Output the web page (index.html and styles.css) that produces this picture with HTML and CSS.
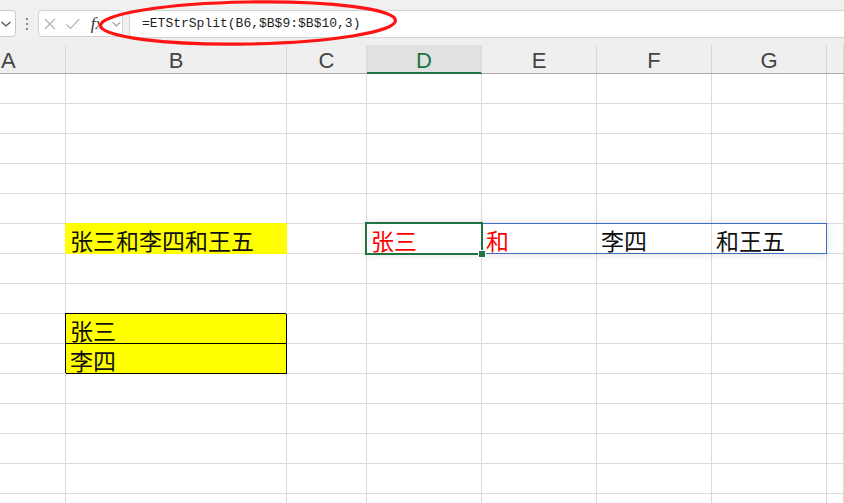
FILE: index.html
```html
<!DOCTYPE html>
<html>
    <head>
        <title>ETStrSplit</title>
        <meta charset="UTF-8">
        <meta name="viewport" content="width=device-width, initial-scale=1.0">
        <link rel="stylesheet" href="styles.css">
    </head>
    <body>
        <div class="topbar">
            <div class="namebox">
                <svg width="12" height="8" viewBox="0 0 12 8"><path d="M1.5 2 L6 6 L10.5 2" fill="none" stroke="#555" stroke-width="1.3"/></svg>
            </div>
            <div class="dots"><span></span><span></span><span></span></div>
            <div class="fxbox">
                <svg class="ico" width="14" height="14" viewBox="0 0 14 14"><path d="M2 2 L12 12 M12 2 L2 12" stroke="#b3b3b3" stroke-width="1.2"/></svg>
                <svg class="ico" width="16" height="14" viewBox="0 0 16 14"><path d="M1.5 7.5 L5.5 11.5 L14.5 2" fill="none" stroke="#b3b3b3" stroke-width="1.2"/></svg>
                <span class="fx">fx</span>
                <svg class="ico" width="11" height="8" viewBox="0 0 11 8"><path d="M1.5 2 L5.5 6 L9.5 2" fill="none" stroke="#999" stroke-width="1.1"/></svg>
            </div>
            <div class="formula">=ETStrSplit(B6,$B$9:$B$10,3)</div>
            <!-- circulo vermelho por cima da barra -->
            <svg class="marca" width="844" height="52" viewBox="0 0 844 52">
                <ellipse cx="248" cy="23" rx="147.5" ry="21" transform="rotate(-1 248 23)" fill="none" stroke="#ff1414" stroke-width="3.2"/>
            </svg>
        </div>

        <div class="colhead">
            <div class="h hA">A</div>
            <div class="h">B</div>
            <div class="h">C</div>
            <div class="h hsel">D</div>
            <div class="h">E</div>
            <div class="h">F</div>
            <div class="h">G</div>
            <div class="h"></div>
        </div>

        <div class="folha">
            <div class="row"><div class="c"></div><div class="c"></div><div class="c"></div><div class="c"></div><div class="c"></div><div class="c"></div><div class="c"></div><div class="c"></div></div>
            <div class="row"><div class="c"></div><div class="c"></div><div class="c"></div><div class="c"></div><div class="c"></div><div class="c"></div><div class="c"></div><div class="c"></div></div>
            <div class="row"><div class="c"></div><div class="c"></div><div class="c"></div><div class="c"></div><div class="c"></div><div class="c"></div><div class="c"></div><div class="c"></div></div>
            <div class="row"><div class="c"></div><div class="c"></div><div class="c"></div><div class="c"></div><div class="c"></div><div class="c"></div><div class="c"></div><div class="c"></div></div>
            <div class="row"><div class="c"></div><div class="c"></div><div class="c"></div><div class="c"></div><div class="c"></div><div class="c"></div><div class="c"></div><div class="c"></div></div>
            <div class="row">
                <div class="c"></div>
                <div class="c amarelo">张三和李四和王五</div>
                <div class="c"></div>
                <div class="c vermelho ativa">张三
                    <div class="intervalo"></div>
                    <div class="selecao"></div>
                    <div class="alca"></div>
                </div>
                <div class="c vermelho">和</div>
                <div class="c">李四</div>
                <div class="c">和王五</div>
                <div class="c"></div>
            </div>
            <div class="row"><div class="c"></div><div class="c"></div><div class="c"></div><div class="c"></div><div class="c"></div><div class="c"></div><div class="c"></div><div class="c"></div></div>
            <div class="row"><div class="c"></div><div class="c"></div><div class="c"></div><div class="c"></div><div class="c"></div><div class="c"></div><div class="c"></div><div class="c"></div></div>
            <div class="row">
                <div class="c"></div>
                <div class="c lista">张三</div>
                <div class="c"></div><div class="c"></div><div class="c"></div><div class="c"></div><div class="c"></div><div class="c"></div>
            </div>
            <div class="row">
                <div class="c"></div>
                <div class="c lista">李四</div>
                <div class="c"></div><div class="c"></div><div class="c"></div><div class="c"></div><div class="c"></div><div class="c"></div>
            </div>
            <div class="row"><div class="c"></div><div class="c"></div><div class="c"></div><div class="c"></div><div class="c"></div><div class="c"></div><div class="c"></div><div class="c"></div></div>
            <div class="row"><div class="c"></div><div class="c"></div><div class="c"></div><div class="c"></div><div class="c"></div><div class="c"></div><div class="c"></div><div class="c"></div></div>
            <div class="row"><div class="c"></div><div class="c"></div><div class="c"></div><div class="c"></div><div class="c"></div><div class="c"></div><div class="c"></div><div class="c"></div></div>
            <div class="row"><div class="c"></div><div class="c"></div><div class="c"></div><div class="c"></div><div class="c"></div><div class="c"></div><div class="c"></div><div class="c"></div></div>
            <div class="row"><div class="c"></div><div class="c"></div><div class="c"></div><div class="c"></div><div class="c"></div><div class="c"></div><div class="c"></div><div class="c"></div></div>
        </div>
    </body>
</html>
```

FILE: styles.css
```css
html, body {
    margin: 0;
    padding: 0;
    height: 100%;
    overflow: hidden;
    background: #fff;
    font-family: "Liberation Sans", Arial, sans-serif;
}

/* barra da formula
   ===================== */
.topbar {
    position: relative;
    height: 38px;
    padding-top: 10px;
    box-sizing: border-box;
    background: #f0f0f0;
    display: flex;
}
.namebox {
    width: 25px;
    height: 27px;
    margin-left: -9px;
    box-sizing: border-box;
    background: #fff;
    border: 1px solid #c9c9c9;
    border-radius: 4px;
    display: flex;
    align-items: center;
    justify-content: flex-end;
    padding-right: 3px;
}
.dots {
    width: 22px;
    display: flex;
    flex-direction: column;
    align-items: center;
    justify-content: center;
    gap: 3px;
    padding-bottom: 1px;
}
.dots span {
    width: 2px;
    height: 2px;
    background: #8a8a8a;
}
.fxbox {
    width: 85px;
    height: 27px;
    box-sizing: border-box;
    background: #fff;
    border: 1px solid #d2d2d2;
    border-radius: 4px;
    display: flex;
    align-items: center;
    padding-left: 4px;
}
.fxbox .ico {
    margin-right: 8px;
}
.fxbox .ico:last-child {
    margin-right: 0;
}
.fx {
    font-family: "Liberation Serif", serif;
    font-style: italic;
    font-size: 17px;
    line-height: 17px;
    color: #333;
    margin: 0 8px 0 2px;
}
.formula {
    flex: 1;
    margin-left: 6px;
    height: 28px;
    box-sizing: border-box;
    background: #fff;
    border-top: 1px solid #d4d4d4;
    border-bottom: 1px solid #d4d4d4;
    border-left: 1px solid #d4d4d4;
    padding-left: 12px;
    font-family: "Liberation Mono", "Courier New", monospace;
    font-size: 13px;
    line-height: 26px;
    color: #1e1e1e;
}
.marca {
    position: absolute;
    left: 0;
    top: 0;
    pointer-events: none;
}

/* cabecalho das colunas
   ===================== */
.colhead, .row {
    display: grid;
    grid-template-columns: 66px 221px 80px 115px 115px 115px 115px 1fr;
}
.colhead {
    background: #efefef;
    padding-top: 7px;
    border-bottom: 1px solid #ababab;
}
.h {
    height: 28px;
    box-sizing: border-box;
    border-right: 1px solid #d8d8d8;
    display: flex;
    align-items: flex-end;
    justify-content: center;
    padding-bottom: 1px;
    font-size: 22px;
    line-height: 22px;
    color: #444;
}
.hA {
    justify-content: flex-start;
    padding-left: 1px;
}
.hsel {
    background: #e1e1e1;
    color: #217346;
    box-shadow: inset 0 -1px 0 #217346, 0 1px 0 #217346;
}

/* celulas
   ===================== */
.c {
    height: 30px;
    box-sizing: border-box;
    border-right: 1px solid #dadada;
    border-bottom: 1px solid #dadada;
    display: flex;
    align-items: flex-end;
    padding-left: 4px;
    font-family: "Noto Sans CJK SC", "Noto Sans", sans-serif;
    font-size: 23px;
    line-height: 26px;
    color: #111;
    white-space: nowrap;
}
.amarelo {
    background: #ffff00;
    border-right-color: #ffff00;
    border-bottom-color: #ffff00;
    box-shadow: -1px -1px 0 #ffff00;
}
.lista {
    background: #ffff00;
    border-right-color: #000;
    border-bottom-color: #000;
    box-shadow: -1px -1px 0 #000;
}
.vermelho {
    color: #ff0000;
}
.ativa {
    position: relative;
}
.intervalo {
    position: absolute;
    left: -1px;
    top: -1px;
    width: 461px;
    height: 31px;
    box-sizing: border-box;
    border: 1px solid #3d6cc0;
    box-shadow: 0 0 9px rgba(0, 0, 0, 0.13);
}
.selecao {
    position: absolute;
    left: -2px;
    top: -2px;
    width: 118px;
    height: 33px;
    box-sizing: border-box;
    border: 2px solid #217346;
}
.alca {
    position: absolute;
    left: 112px;
    top: 27px;
    width: 6px;
    height: 6px;
    background: #217346;
    box-shadow: 0 0 0 1px #fff;
}
```
